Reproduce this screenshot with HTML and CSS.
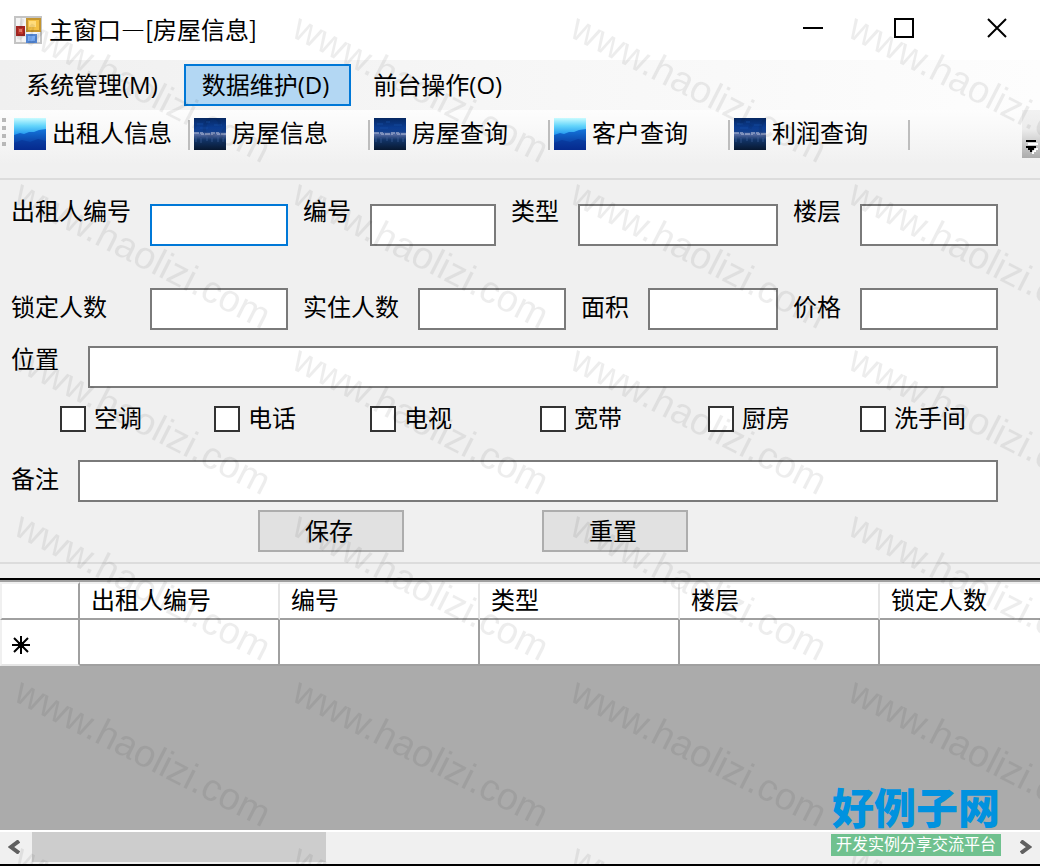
FILE: index.html
```
<!DOCTYPE html>
<html lang="zh-CN">
  <head>
    <title>主窗口—[房屋信息]</title>
    <meta charset="UTF-8">
    <link rel="stylesheet" href="styles.css">
  </head>
  <body>
    <svg class="defs" width="0" height="0" aria-hidden="true">
      <defs>
        <linearGradient id="sky" x1="0" y1="0" x2="0" y2="1">
          <stop offset="0" stop-color="#c8fbff"/>
          <stop offset="0.25" stop-color="#62d4fb"/>
          <stop offset="0.5" stop-color="#279cf0"/>
          <stop offset="1" stop-color="#1671d8"/>
        </linearGradient>
        <linearGradient id="hill" x1="0" y1="0" x2="0" y2="1">
          <stop offset="0" stop-color="#1476dc"/>
          <stop offset="1" stop-color="#05268a"/>
        </linearGradient>
        <linearGradient id="night" x1="0" y1="0" x2="0" y2="1">
          <stop offset="0" stop-color="#062862"/>
          <stop offset="0.3" stop-color="#0b3c91"/>
          <stop offset="0.42" stop-color="#123f8d"/>
          <stop offset="0.52" stop-color="#53699f"/>
          <stop offset="0.68" stop-color="#123468"/>
          <stop offset="1" stop-color="#07172f"/>
        </linearGradient>
        <symbol id="day-icon" viewBox="0 0 32 32">
          <rect width="32" height="32" fill="url(#sky)"/>
          <path d="M0 17l6-2 4 1 5-2 5 0 5-2 7-1v21H0z" fill="url(#hill)"/>
          <path d="M0 25l8-3 8 2 8-3 8 2v9H0z" fill="#062d91" opacity="0.5"/>
        </symbol>
        <symbol id="night-icon" viewBox="0 0 32 32">
          <rect width="32" height="32" fill="url(#night)"/>
          <path d="M0 15h8v1h10v-1h6v1h8" fill="none" stroke="#a9b4d2" stroke-width="2" stroke-dasharray="5 1" opacity="0.6"/>
          <path d="M2 19v5M7 20v5M13 19v4M18 20v4M24 19v5M29 20v4" stroke="#4668a0" stroke-width="2" opacity="0.3"/>
          <path d="M3 6h6M12 4h4M20 7h8M6 10h8" stroke="#164da2" stroke-width="2" opacity="0.4"/>
        </symbol>
      </defs>
    </svg>

    <div class="window">
      <header class="titlebar">
        <svg class="app-icon" width="28" height="28" viewBox="0 0 28 28" aria-hidden="true">
          <rect x="1" y="1" width="26" height="26" fill="#f4f4f4" stroke="#c4c4c4" stroke-width="2"/>
          <path d="M7 2v8M7 19v7M2 20h10M24 17v9" stroke="#d8d8d8" stroke-width="1"/>
          <rect x="13" y="3" width="13" height="12" fill="#f3c044" stroke="#c4952f" stroke-width="2"/>
          <rect x="15" y="5" width="7" height="6" fill="#ffdc7c"/>
          <rect x="3" y="11" width="7" height="8" fill="#c5382c" stroke="#a32622" stroke-width="2"/>
          <rect x="5" y="13" width="3" height="3" fill="#ec7d70"/>
          <rect x="13" y="19" width="9" height="7" fill="#79acf5" stroke="#5285d3" stroke-width="2"/>
        </svg>
        <h1>主窗口—[房屋信息]</h1>
        <div class="window-buttons">
          <button type="button" aria-label="最小化"><svg width="20" height="20"><path d="M0 10h20" stroke="#000" stroke-width="2"/></svg></button>
          <button type="button" aria-label="最大化"><svg width="20" height="20"><rect x="1" y="1" width="18" height="18" fill="none" stroke="#000" stroke-width="2"/></svg></button>
          <button type="button" aria-label="关闭"><svg width="20" height="20"><path d="M1 1l18 18M19 1L1 19" stroke="#000" stroke-width="2"/></svg></button>
        </div>
      </header>

      <nav class="menubar">
        <button type="button">系统管理(M)</button>
        <button type="button" class="open">数据维护(D)</button>
        <button type="button">前台操作(O)</button>
      </nav>

      <div class="toolbar">
        <span class="grip"></span>
        <button type="button" class="tool"><svg width="32" height="32"><use href="#day-icon"/></svg><span>出租人信息</span></button>
        <button type="button" class="tool"><svg width="32" height="32"><use href="#night-icon"/></svg><span>房屋信息</span></button>
        <button type="button" class="tool"><svg width="32" height="32"><use href="#night-icon"/></svg><span>房屋查询</span></button>
        <button type="button" class="tool"><svg width="32" height="32"><use href="#day-icon"/></svg><span>客户查询</span></button>
        <button type="button" class="tool"><svg width="32" height="32"><use href="#night-icon"/></svg><span>利润查询</span></button>
        <button type="button" class="more" aria-label="更多"><svg width="14" height="16"><path d="M4 3h10v2H4zM12 8h2v2h-2v2h-2v2H8v-2z" fill="#fff"/><path d="M2 0h10v2H2zM2 6h10v2h-2v2H8v2H6v-2H4V8H2z"/></svg></button>
      </div>

      <form class="house">
        <div class="row row-top">
          <label for="renter">出租人编号</label><input id="renter" class="active" type="text">
          <label for="code">编号</label><input id="code" type="text">
          <label for="kind">类型</label><input id="kind" type="text">
          <label for="floor">楼层</label><input id="floor" type="text">
        </div>
        <div class="row row-people">
          <label for="locked">锁定人数</label><input id="locked" type="text">
          <label for="living">实住人数</label><input id="living" type="text">
          <label for="area">面积</label><input id="area" type="text">
          <label for="price">价格</label><input id="price" type="text">
        </div>
        <div class="row row-place">
          <label for="place">位置</label><input id="place" type="text">
        </div>
        <div class="checks">
          <label><input type="checkbox"><span>空调</span></label>
          <label><input type="checkbox"><span>电话</span></label>
          <label><input type="checkbox"><span>电视</span></label>
          <label><input type="checkbox"><span>宽带</span></label>
          <label><input type="checkbox"><span>厨房</span></label>
          <label><input type="checkbox"><span>洗手间</span></label>
        </div>
        <div class="row row-note">
          <label for="note">备注</label><input id="note" type="text">
        </div>
        <div class="actions">
          <button type="button">保存</button>
          <button type="reset">重置</button>
        </div>
      </form>

      <main class="grid">
        <table>
          <colgroup><col class="head-col"><col class="data-col"><col class="data-col"><col class="data-col"><col class="data-col"><col></colgroup>
          <thead>
            <tr><th></th><th>出租人编号</th><th>编号</th><th>类型</th><th>楼层</th><th>锁定人数</th></tr>
          </thead>
          <tbody>
            <tr>
              <th scope="row"><svg width="18" height="18" viewBox="0 0 18 18" aria-label="新行"><path d="M9 0v18M0 9h18M2 2l14 14M16 2L2 16" stroke="#000" stroke-width="2"/><rect x="6" y="6" width="6" height="6"/></svg></th>
              <td></td><td></td><td></td><td></td><td></td>
            </tr>
          </tbody>
        </table>
      </main>

      <div class="scrollbar">
        <button type="button" aria-label="向左"><svg width="12" height="14"><path d="M11 1L3 7l8 6" fill="none" stroke="#606060" stroke-width="4"/></svg></button>
        <div class="track"><div class="thumb"></div></div>
        <button type="button" aria-label="向右"><svg width="12" height="14"><path d="M1 1l8 6-8 6" fill="none" stroke="#606060" stroke-width="4"/></svg></button>
      </div>

      <svg class="watermark" aria-hidden="true">
        <defs>
          <pattern id="mark" width="278" height="166" patternUnits="userSpaceOnUse">
            <text x="0" y="0" transform="translate(12 36) rotate(27)">www.haolizi.com</text>
          </pattern>
        </defs>
        <rect width="100%" height="100%" fill="url(#mark)"/>
      </svg>
      <div class="site-logo">
        <strong>好例子网</strong>
        <span>开发实例分享交流平台</span>
      </div>
    </div>
  </body>
</html>
```
FILE: styles.css
```
* {
  box-sizing: border-box;
}
body {
  margin: 0;
  background: #f0f0f0;
  color: #000;
  font-family: "Noto Sans CJK SC", sans-serif;
  font-size: 24px;
  line-height: 36px;
}
button, input {
  font: inherit;
  color: inherit;
  margin: 0;
  padding: 0;
}
button {
  border: none;
  background: none;
  border-radius: 0;
}
svg {
  display: block;
  flex: none;
}
.defs {
  position: absolute;
}
.window {
  position: relative;
  min-height: 100vh;
  display: flex;
  flex-direction: column;
  overflow: hidden;
  border-bottom: 2px solid #000;
}

/* title bar */
.titlebar {
  height: 60px;
  background: #fff;
  display: flex;
  align-items: center;
  padding-left: 14px;
}
.titlebar h1 {
  margin: 0 auto 0 7px;
  padding-bottom: 2px;
  font-size: 24px;
  font-weight: normal;
}
.window-buttons {
  display: flex;
  height: 56px;
  align-self: flex-start;
}
.window-buttons button {
  width: 92px;
  display: flex;
  align-items: center;
  justify-content: center;
}
.window-buttons button:first-child {
  padding-right: 6px;
}
.window-buttons button:nth-child(2) {
  padding-right: 8px;
}
.window-buttons button:last-child {
  width: 86px;
}

/* menu */
.menubar {
  height: 50px;
  padding: 4px 8px;
  display: flex;
  gap: 4px;
  background: linear-gradient(to right, #f0f0f0, #fdfdfd);
  font-family: "Open Sans", "Noto Sans CJK SC", sans-serif;
}
.menubar button {
  height: 42px;
  padding: 0 20px 0 16px;
  border: 2px solid transparent;
  white-space: nowrap;
}
.menubar .open {
  border-color: #0078d7;
  background: #b3d7f3;
}

/* toolbar */
.toolbar {
  height: 70px;
  display: flex;
  align-items: flex-start;
  padding-left: 2px;
  background: linear-gradient(#fdfdfd, #f0f0f0 80%);
  border-bottom: 2px solid #dcdcdc;
}
.grip {
  width: 4px;
  height: 28px;
  margin: 8px 8px 0 0;
  background: repeating-linear-gradient(#b8b8b8 0 4px, transparent 4px 8px);
}
.tool {
  width: 176px;
  height: 32px;
  margin: 8px 4px 0 0;
  display: flex;
  align-items: center;
  gap: 6px;
  line-height: 28px;
  white-space: nowrap;
  background: linear-gradient(#bdbdbd, #bdbdbd) right bottom / 2px 30px no-repeat;
}
.tool span {
  padding-bottom: 4px;
}
.more {
  width: 18px;
  height: 48px;
  margin-left: auto;
  display: flex;
  align-items: flex-end;
  justify-content: flex-end;
  padding: 0 2px 2px 0;
  background: linear-gradient(#f2f2f2, #ececec 40%, #ababab);
}

/* form */
.house {
  padding: 18px 42px 10px 11px;
  border-bottom: 2px solid #dcdcdc;
}
.row {
  display: grid;
  align-items: center;
}
.row label {
  line-height: 24px;
  white-space: nowrap;
}
.row label:not(:first-child) {
  padding-left: 15px;
}
.row input {
  width: 100%;
  min-width: 0;
  height: 42px;
  padding: 0 6px;
  border: 2px solid #7a7a7a;
  border-radius: 0;
  background: #fff;
  outline: none;
}
.row input.active {
  border-color: #0078d7;
}
.row-top {
  grid-template-columns: 139px 138fr 82px 126fr 82px 200fr 82px 138fr;
  align-items: start;
}
.row-top input {
  margin-top: 6px;
}
.row-people {
  grid-template-columns: 139px 138fr 130px 148fr 82px 130fr 82px 138fr;
  margin-top: 42px;
}
.row-people label, .row-note label {
  padding-bottom: 6px;
}
.row-place {
  grid-template-columns: 77px 1fr;
  align-items: start;
  margin-top: 16px;
}
.checks {
  display: grid;
  grid-template-columns: 154fr 156fr 170fr 168fr 152fr 138fr;
  margin: 18px 0 28px 49px;
}
.checks label {
  display: flex;
  align-items: center;
  gap: 8px;
  height: 26px;
  line-height: 22px;
  white-space: nowrap;
}
.checks span {
  padding-bottom: 4px;
}
.checks input {
  appearance: none;
  width: 26px;
  height: 26px;
  border: 2px solid #333;
  background: #fff;
}
.checks input:checked {
  background: #333;
}
.row-note {
  grid-template-columns: 67px 1fr;
}
.actions {
  display: flex;
  gap: 138px;
  margin-top: 8px;
  padding-left: 247px;
}
.actions button {
  width: 146px;
  height: 42px;
  padding: 0 4px 4px 0;
  border: 2px solid #adadad;
  background: #e1e1e1;
}

/* data grid */
.grid {
  flex: 1;
  margin-top: 14px;
  border-top: 2px solid #000;
  border-bottom: 2px solid #fff;
  background: #ababab;
}
.grid table {
  width: 100%;
  table-layout: fixed;
  border-collapse: separate;
  border-spacing: 0;
  border-top: 2px solid #a0a0a0;
  background: #fff;
}
.head-col {
  width: 80px;
}
.data-col {
  width: 200px;
}
.grid th, .grid td {
  padding: 0 0 0 11px;
  text-align: left;
  font-weight: normal;
  white-space: nowrap;
  border-right: 2px solid #a0a0a0;
  border-bottom: 2px solid #a0a0a0;
}
.grid thead th {
  height: 38px;
  padding-bottom: 4px;
  line-height: 30px;
  border-top: 2px solid #f0f0f0;
  border-right-color: #e5e5e5;
}
.grid thead th:first-child {
  border-right-color: #a0a0a0;
}
.grid th:first-child {
  border-left: 2px solid #f0f0f0;
  padding-left: 10px;
}
.grid tbody th {
  height: 46px;
  padding-top: 6px;
  border-bottom-color: #e5e5e5;
}
.grid tr > :last-child {
  border-right: none;
}

/* horizontal scroll bar */
.scrollbar {
  display: flex;
  height: 32px;
  padding-bottom: 2px;
}
.scrollbar button {
  width: 32px;
  padding-left: 8px;
}
.scrollbar button:last-child {
  width: 28px;
}
.track {
  flex: 1;
}
.thumb {
  width: 294px;
  height: 30px;
  background: #cdcdcd;
}

/* overlays */
.watermark {
  position: absolute;
  top: 0;
  left: 0;
  width: 100%;
  height: 100%;
  pointer-events: none;
}
.watermark text {
  font-family: "Liberation Sans", sans-serif;
  font-size: 38px;
  fill: #000;
  fill-opacity: 0.07;
}
.site-logo {
  position: absolute;
  right: 39px;
  bottom: 8px;
  width: 170px;
  font-family: "Liberation Sans", "Noto Sans CJK SC", sans-serif;
  text-align: center;
  white-space: nowrap;
}
.site-logo strong {
  display: block;
  font-size: 42px;
  line-height: 48px;
  font-weight: 900;
  color: #0092df;
}
.site-logo span {
  display: block;
  background: #70c18f;
  color: #fff;
  font-size: 16px;
  line-height: 22px;
}
```
